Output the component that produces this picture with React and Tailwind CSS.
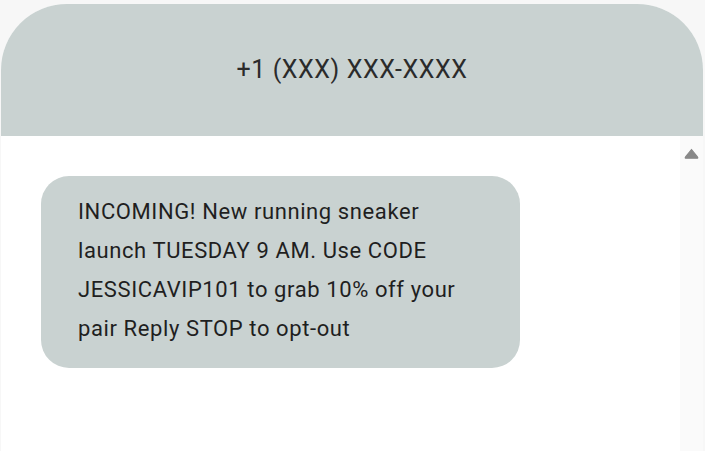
export default function App() {
  return (
    <div className="w-[705px] h-[451px] overflow-hidden bg-[#f7f7f7] pt-[4px] pl-[1px] pr-[2px]" style={{ fontFamily: 'Roboto, "Liberation Sans", sans-serif' }}>
      <div className="h-full flex flex-col bg-white rounded-t-[66px] overflow-hidden">
        <div className="h-[132px] shrink-0 bg-[#c9d2d1] flex items-center justify-center">
          <span className="text-[25px] text-[#2b2b2b] tracking-[0.6px]">+1 (XXX) XXX-XXXX</span>
        </div>
        <div className="flex-1 flex min-h-0">
          <div className="flex-1 pl-[40px] pt-[40px]">
            <div className="w-[479px] rounded-[28px] bg-[#c9d2d1] pl-[37px] pr-[40px] pt-[16px] pb-[20px] text-[22px] leading-[39px] tracking-[0.6px] text-[#1f1f1f]">
              INCOMING! New running sneaker launch TUESDAY 9 AM. Use CODE JESSICAVIP101 to grab 10% off your pair Reply STOP to opt-out
            </div>
          </div>
          <div className="w-[23px] bg-[#fafafa] flex justify-center pt-[12px]">
            <svg width="15" height="11" viewBox="0 0 15 11">
              <path d="M7.5 1.5 L13.6 9.2 Q14.2 10.2 13 10.2 L2 10.2 Q0.8 10.2 1.4 9.2 Z" fill="#888" stroke="#888" strokeWidth="1.2" strokeLinejoin="round" />
            </svg>
          </div>
        </div>
      </div>
    </div>
  )
}
